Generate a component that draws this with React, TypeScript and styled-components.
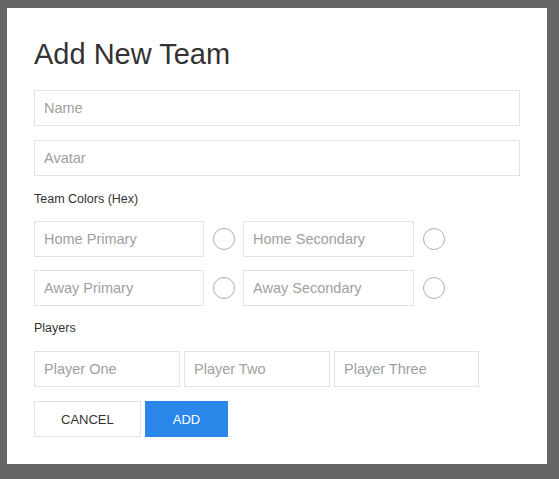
import React from "react";
import styled, { createGlobalStyle } from "styled-components";

const Global = createGlobalStyle`
  html, body { margin: 0; padding: 0; background: #666666; }
  body { font-family: "Liberation Sans", Arial, sans-serif; }
  * { box-sizing: border-box; }
`;

const Page = styled.div`
  padding: 8px 12px 15px 7px;
`;

const Modal = styled.div`
  width: 540px;
  background: #ffffff;
  padding: 27px;
  display: flex;
  flex-direction: column;
`;

const Title = styled.h1`
  margin: 2px 0 19px;
  font-size: 29px;
  line-height: 34px;
  font-weight: 400;
  color: #333333;
`;

const Input = styled.input<{ $w?: number }>`
  display: block;
  width: ${(p) => (p.$w ? `${p.$w}px` : "100%")};
  height: 36px;
  border: 1px solid #e3e3e3;
  border-radius: 0;
  padding: 0 9px;
  font-family: "Liberation Sans", Arial, sans-serif;
  font-size: 14.5px;
  color: #333;
  outline: none;
  &::placeholder { color: #a0a0a0; }
`;

const Stack = styled.div<{ $gap: number }>`
  display: flex;
  flex-direction: column;
  gap: ${(p) => p.$gap}px;
`;

const Label = styled.div<{ $top: number; $bottom: number }>`
  margin: ${(p) => p.$top}px 0 ${(p) => p.$bottom}px;
  font-size: 12.5px;
  line-height: 15px;
  color: #333333;
`;

const Row = styled.div<{ $gap?: number }>`
  display: flex;
  align-items: center;
  gap: ${(p) => p.$gap ?? 0}px;
`;

const Swatch = styled.div`
  width: 22px;
  height: 22px;
  border-radius: 50%;
  border: 1px solid #b0b0b0;
  margin: 0 8px 0 9px;
  flex: none;
`;

const Actions = styled.div`
  display: flex;
  gap: 4px;
  margin-top: 14px;
`;

const Button = styled.button<{ $primary?: boolean; $pad: number }>`
  height: 36px;
  padding: 0 ${(p) => p.$pad}px;
  font-family: "Liberation Sans", Arial, sans-serif;
  font-size: 13px;
  text-transform: uppercase;
  border: 1px solid ${(p) => (p.$primary ? "#2a86e8" : "#e3e3e3")};
  background: ${(p) => (p.$primary ? "#2a86e8" : "#ffffff")};
  color: ${(p) => (p.$primary ? "#ffffff" : "#333333")};
  border-radius: 0;
  cursor: pointer;
`;

export default function App() {
  return (
    <>
      <Global />
      <Page>
        <Modal>
          <Title>Add New Team</Title>
          <Stack $gap={14}>
            <Input placeholder="Name" />
            <Input placeholder="Avatar" />
          </Stack>
          <Label $top={16} $bottom={14}>Team Colors (Hex)</Label>
          <Stack $gap={13}>
            <Row>
              <Input $w={170} placeholder="Home Primary" />
              <Swatch />
              <Input $w={171} placeholder="Home Secondary" />
              <Swatch />
            </Row>
            <Row>
              <Input $w={170} placeholder="Away Primary" />
              <Swatch />
              <Input $w={171} placeholder="Away Secondary" />
              <Swatch />
            </Row>
          </Stack>
          <Label $top={15} $bottom={15}>Players</Label>
          <Row $gap={4}>
            <Input $w={146} placeholder="Player One" />
            <Input $w={146} placeholder="Player Two" />
            <Input $w={145} placeholder="Player Three" />
          </Row>
          <Actions>
            <Button $pad={26}>Cancel</Button>
            <Button $primary $pad={27}>Add</Button>
          </Actions>
        </Modal>
      </Page>
    </>
  );
}
